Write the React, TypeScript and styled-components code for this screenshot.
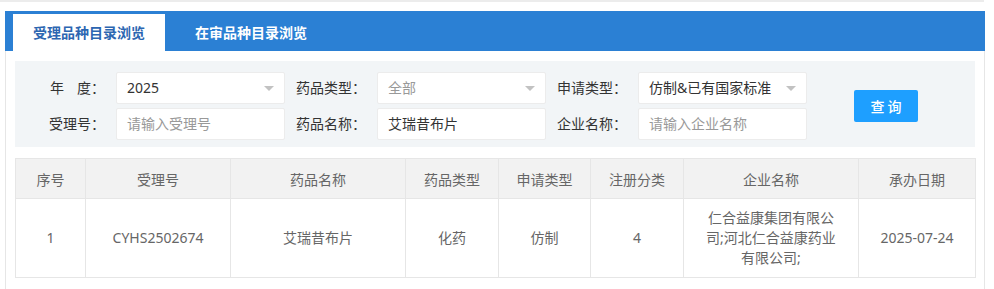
import React from 'react';
import styled, { createGlobalStyle } from 'styled-components';

const GlobalStyle = createGlobalStyle`
  html, body {
    margin: 0;
    padding: 0;
    background: #fff;
  }
  body {
    font-family: "Noto Sans", "Noto Sans CJK SC", sans-serif;
    font-size: 14px;
    color: #333;
  }
`;

const TopRule = styled.div`
  width: 984px;
  height: 2px;
  background: #ececec;
  margin-bottom: 9px;
`;

const Panel = styled.div`
  box-sizing: border-box;
  margin-left: 5px;
  width: 980px;
  height: 278px;
  border-left: 1px solid #e6e6e6;
  border-right: 1px solid #e6e6e6;
`;

const TabBar = styled.div`
  display: flex;
  align-items: flex-end;
  height: 40px;
  margin: 0 -1px;
  padding-left: 8px;
  background: #2b80d4;
`;

const Tab = styled.div<{ active?: boolean }>`
  height: 37px;
  line-height: 37px;
  padding: 0 20px;
  margin-right: 10px;
  font-weight: bold;
  font-size: 14px;
  color: ${(p) => (p.active ? '#2c66b1' : '#fff')};
  background: ${(p) => (p.active ? '#fff' : 'transparent')};
`;

const Body = styled.div`
  padding: 10px 9px 0 9px;
`;

const Filter = styled.div`
  display: flex;
  align-items: center;
  height: 86px;
  box-sizing: border-box;
  padding: 3px 0 0 9px;
  background: #f2f5f7;
`;

const FieldGrid = styled.div`
  display: grid;
  grid-template-columns: repeat(3, 92px 169px);
  row-gap: 4px;
`;

const Label = styled.label`
  height: 32px;
  line-height: 32px;
  padding-right: 11px;
  text-align: right;
  color: #333;
  white-space: nowrap;
`;

const Gap = styled.span`
  display: inline-block;
  width: 13px;
`;

const Field = styled.div<{ muted?: boolean }>`
  position: relative;
  box-sizing: border-box;
  height: 32px;
  line-height: 30px;
  padding-left: 10px;
  background: #fff;
  border: 1px solid #ececec;
  border-radius: 2px;
  color: ${(p) => (p.muted ? '#999' : '#333')};
  white-space: nowrap;
  overflow: hidden;
`;

const Caret = styled.i`
  position: absolute;
  right: 10px;
  top: 13px;
  width: 0;
  height: 0;
  border-left: 5px solid transparent;
  border-right: 5px solid transparent;
  border-top: 5px solid #c2c2c2;
`;

const SearchButton = styled.button`
  margin-left: 47px;
  width: 64px;
  height: 32px;
  border: none;
  border-radius: 2px;
  background: #1e9fff;
  color: #fff;
  font-family: "Noto Sans CJK SC", sans-serif;
  font-size: 14px;
  font-weight: 500;
  letter-spacing: 3px;
  padding: 0 0 0 3px;
  cursor: pointer;
`;

const Table = styled.table`
  margin-top: 11px;
  width: 960px;
  table-layout: fixed;
  border-collapse: collapse;
  color: #666;
`;

const Th = styled.th`
  height: 39px;
  padding: 0;
  font-weight: normal;
  background: #f2f2f2;
  border: 1px solid #e6e6e6;
  text-align: center;
`;

const Td = styled.td`
  height: 78px;
  padding: 0 20px;
  line-height: 20px;
  border: 1px solid #e6e6e6;
  text-align: center;
  word-break: break-all;
`;

const columns = [
  { title: '序号', width: 70 },
  { title: '受理号', width: 145 },
  { title: '药品名称', width: 175 },
  { title: '药品类型', width: 93 },
  { title: '申请类型', width: 92 },
  { title: '注册分类', width: 93 },
  { title: '企业名称', width: 175 },
  { title: '承办日期', width: 117 },
];

const rows = [
  [
    '1',
    'CYHS2502674',
    '艾瑞昔布片',
    '化药',
    '仿制',
    '4',
    '仁合益康集团有限公司;河北仁合益康药业有限公司;',
    '2025-07-24',
  ],
];

const App: React.FC = () => {
  return (
    <>
      <GlobalStyle />
      <TopRule />
      <Panel>
        <TabBar>
          <Tab active>受理品种目录浏览</Tab>
          <Tab>在审品种目录浏览</Tab>
        </TabBar>
        <Body>
          <Filter>
            <FieldGrid>
              <Label>
                年<Gap />度：
              </Label>
              <Field>
                2025
                <Caret />
              </Field>
              <Label>药品类型：</Label>
              <Field muted>
                全部
                <Caret />
              </Field>
              <Label>申请类型：</Label>
              <Field>
                仿制&amp;已有国家标准
                <Caret />
              </Field>

              <Label>受理号：</Label>
              <Field muted>请输入受理号</Field>
              <Label>药品名称：</Label>
              <Field>艾瑞昔布片</Field>
              <Label>企业名称：</Label>
              <Field muted>请输入企业名称</Field>
            </FieldGrid>
            <SearchButton>查询</SearchButton>
          </Filter>

          <Table>
            <colgroup>
              {columns.map((c) => (
                <col key={c.title} style={{ width: c.width }} />
              ))}
            </colgroup>
            <thead>
              <tr>
                {columns.map((c) => (
                  <Th key={c.title}>{c.title}</Th>
                ))}
              </tr>
            </thead>
            <tbody>
              {rows.map((r, i) => (
                <tr key={i}>
                  {r.map((cell, j) => (
                    <Td key={j}>{cell}</Td>
                  ))}
                </tr>
              ))}
            </tbody>
          </Table>
        </Body>
      </Panel>
    </>
  );
};

export default App;
